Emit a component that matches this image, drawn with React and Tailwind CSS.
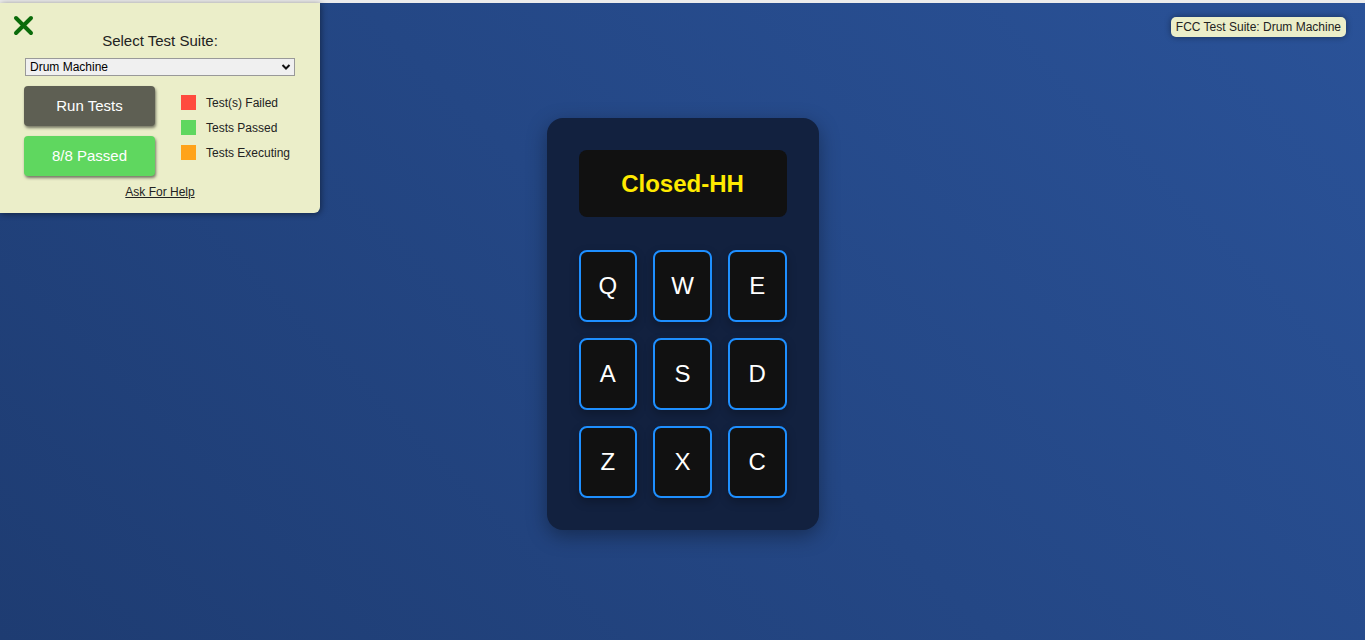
import React from "react";

const pads = ["Q", "W", "E", "A", "S", "D", "Z", "X", "C"];

export default function App() {
  return (
    <div className="relative w-[1365px] h-[640px] overflow-hidden flex flex-col" style={{ fontFamily: '"Liberation Sans", Arial, sans-serif' }}>
      <div className="h-[3px] bg-[#ececec] shrink-0" />
      <div className="flex-1 bg-[linear-gradient(45deg,#1e3c72,#2a5298)] flex justify-center items-start">
        <div className="mt-[115px] w-[272px] h-[412px] bg-[#12213f] rounded-[16px] px-[32px] pt-[32px] shadow-[0_6px_20px_rgba(0,0,0,0.35)]">
          <div className="h-[67px] w-[208px] bg-[#111111] rounded-[8px] flex items-center justify-center text-[#ffea00] font-bold text-[24px]">
            Closed-HH
          </div>
          <div className="mt-[33px] w-[208px] grid grid-cols-3 gap-x-[16px] gap-y-[16px]">
            {pads.map((p) => (
              <div key={p} className="h-[72px] bg-[#111111] border-2 border-[#1e8fff] rounded-[8px] flex items-center justify-center text-white text-[24px] shadow-[0_4px_10px_rgba(0,0,0,0.25)]">
                {p}
              </div>
            ))}
          </div>
        </div>
      </div>

      <div className="absolute left-0 top-[3px] w-[320px] h-[210px] bg-[#ebeec9] rounded-br-[6px] shadow-[1px_1px_6px_rgba(0,0,0,0.45)] flex flex-col items-center">
        <svg className="absolute left-[13px] top-[12px]" width="21" height="21" viewBox="0 0 21 21">
          <path d="M3 3 L18 18 M18 3 L3 18" stroke="#0b6b0b" strokeWidth="4" strokeLinecap="round" />
        </svg>
        <div className="mt-[29px] text-[15px] text-[#222] leading-[18px]">Select Test Suite:</div>
        <div className="mt-[8px] w-[270px] h-[18px] border border-[#999] bg-[#f0f0f0] flex items-center justify-between pl-[4px] pr-[3px] text-[12px] text-black">
          <span>Drum Machine</span>
          <svg width="10" height="8" viewBox="0 0 10 8"><path d="M1.5 2 L5 5.5 L8.5 2" stroke="#111" strokeWidth="2" fill="none" /></svg>
        </div>
        <div className="mt-[10px] w-[270px] flex">
          <div className="flex flex-col gap-[10px] ml-[-1px]">
            <div className="w-[131px] h-[40px] rounded-[4px] bg-[#5e5f53] text-white text-[15px] flex items-center justify-center shadow-[1px_2px_3px_rgba(0,0,0,0.5)]">Run Tests</div>
            <div className="w-[131px] h-[40px] rounded-[4px] bg-[#5fd75f] text-white text-[15px] flex items-center justify-center shadow-[1px_2px_3px_rgba(0,0,0,0.5)]">8/8 Passed</div>
          </div>
          <div className="ml-[26px] mt-[9px] flex flex-col gap-[10px] text-[12px] text-[#222]">
            <div className="flex items-center gap-[10px] h-[15px]"><span className="w-[15px] h-[15px] bg-[#ff4b3e]" />Test(s) Failed</div>
            <div className="flex items-center gap-[10px] h-[15px]"><span className="w-[15px] h-[15px] bg-[#5fd75f]" />Tests Passed</div>
            <div className="flex items-center gap-[10px] h-[15px]"><span className="w-[15px] h-[15px] bg-[#ffa31a]" />Tests Executing</div>
          </div>
        </div>
        <div className="mt-[7px] text-[12px] text-[#222] underline">Ask For Help</div>
      </div>

      <div className="absolute right-[19px] top-[17px] h-[20px] px-[5px] flex items-center rounded-[5px] bg-[#ebeec9] text-[12px] text-[#222] shadow-[0_0_6px_rgba(0,0,0,0.4)]">
        FCC Test Suite: Drum Machine
      </div>
    </div>
  );
}
